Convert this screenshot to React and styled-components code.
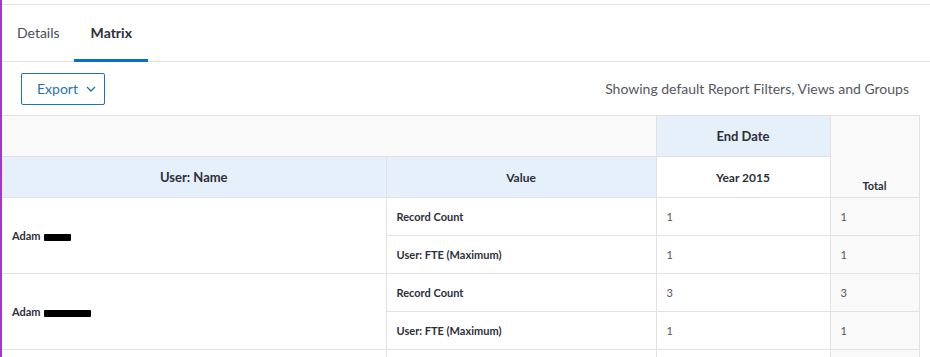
import React from "react";
import styled, { createGlobalStyle } from "styled-components";

const Global = createGlobalStyle`
  html, body { margin: 0; padding: 0; background: #fff; }
  body { font-family: Lato, "Open Sans", Arial, sans-serif; color: #2d2f3b; }
  * { box-sizing: border-box; }
`;

const Page = styled.div`
  width: 930px;
  height: 357px;
  overflow: hidden;
  border-left: 2px solid #9a3fb8;
  padding-top: 4px;
`;

const Frame = styled.div`
  border-top: 1px solid #e2e2e2;
`;

const Tabs = styled.div`
  display: flex;
  height: 57px;
  border-bottom: 1px solid #e2e2e2;
`;

const Tab = styled.div`
  display: flex;
  align-items: center;
  padding: ${(p) => (p.$active ? "0 16px 0 17px" : "0 14px 0 15px")};
  font-size: 14px;
  font-weight: ${(p) => (p.$active ? 700 : 400)};
  color: ${(p) => (p.$active ? "#2d2f3b" : "#4a4c57")};
  border-bottom: 3px solid ${(p) => (p.$active ? "#0b6fc6" : "transparent")};
  margin-bottom: -1px;
`;

const Toolbar = styled.div`
  display: flex;
  align-items: center;
  justify-content: space-between;
  height: 53px;
  padding: 0 19px;
`;

const ExportButton = styled.button`
  display: flex;
  align-items: center;
  gap: 8px;
  height: 32px;
  width: 84px;
  padding: 0 0 0 15px;
  border: 1px solid #1f73b7;
  border-radius: 2px;
  background: #fff;
  color: #1f73b7;
  font-family: Lato, "Open Sans", Arial, sans-serif;
  font-size: 14px;
`;

const Info = styled.div`
  font-size: 14px;
  color: #555760;
  padding-right: 2px;
`;

const Table = styled.table`
  border-collapse: collapse;
  width: 917px;
  table-layout: fixed;
  border-top: 1px solid #e2e2e2;
`;

const HeadCell = styled.th`
  height: 41px;
  padding: 0 10px;
  border: 1px solid #e2e2e2;
  font-size: ${(p) => p.$size || 13}px;
  font-weight: 700;
  color: #2d2f3b;
  text-align: center;
  vertical-align: ${(p) => (p.$bottom ? "bottom" : "middle")};
  padding-bottom: ${(p) => (p.$bottom ? "5px" : "0")};
  background: ${(p) =>
    p.$tone === "blue" ? "#e6f0fa" : p.$tone === "grey" ? "#f9f9f9" : "#fff"};
  &:first-child { border-left: none; }
`;

const Cell = styled.td`
  height: ${(p) => (p.$short ? "8px" : "38px")};
  padding: 0 10px;
  border: 1px solid #e2e2e2;
  font-size: 11px;
  font-weight: ${(p) => (p.$bold ? 700 : 400)};
  color: ${(p) => (p.$bold ? "#2d2f3b" : "#555555")};
  background: ${(p) => (p.$grey ? "#f9f9f9" : "#fff")};
  vertical-align: middle;
  &:first-child { border-left: none; }
`;

const Redact = styled.span`
  display: inline-block;
  width: ${(p) => p.$w}px;
  height: 7px;
  background: #000;
  margin-left: 3px;
  vertical-align: -1px;
  border-radius: 1px;
`;

const rows = [
  { name: "Adam", redact: 27, values: [["Record Count", "1", "1"], ["User: FTE (Maximum)", "1", "1"]] },
  { name: "Adam", redact: 47, values: [["Record Count", "3", "3"], ["User: FTE (Maximum)", "1", "1"]] },
];

export default function App() {
  return (
    <>
      <Global />
      <Page>
        <Frame>
          <Tabs>
            <Tab>Details</Tab>
            <Tab $active>Matrix</Tab>
          </Tabs>
          <Toolbar>
            <ExportButton>
              Export
              <svg width="10" height="6" viewBox="0 0 10 6" fill="none">
                <path d="M1 1l4 4 4-4" stroke="#1f73b7" strokeWidth="1.3" />
              </svg>
            </ExportButton>
            <Info>Showing default Report Filters, Views and Groups</Info>
          </Toolbar>
          <Table>
            <colgroup>
              <col style={{ width: 384 }} />
              <col style={{ width: 270 }} />
              <col style={{ width: 174 }} />
              <col style={{ width: 89 }} />
            </colgroup>
            <thead>
              <tr>
                <HeadCell colSpan={2} $tone="grey" />
                <HeadCell $tone="blue">End Date</HeadCell>
                <HeadCell rowSpan={2} $tone="grey" $size={11} $bottom>
                  Total
                </HeadCell>
              </tr>
              <tr>
                <HeadCell $tone="blue">User: Name</HeadCell>
                <HeadCell $tone="blue" $size={12}>Value</HeadCell>
                <HeadCell $size={12}>Year 2015</HeadCell>
              </tr>
            </thead>
            <tbody>
              {rows.map((r, i) =>
                r.values.map((v, j) => (
                  <tr key={`${i}-${j}`}>
                    {j === 0 && (
                      <Cell rowSpan={2} $bold>
                        {r.name}
                        <Redact $w={r.redact} />
                      </Cell>
                    )}
                    <Cell $bold>{v[0]}</Cell>
                    <Cell>{v[1]}</Cell>
                    <Cell $grey>{v[2]}</Cell>
                  </tr>
                ))
              )}
              <tr>
                <Cell $short />
                <Cell $short />
                <Cell $short />
                <Cell $short $grey />
              </tr>
            </tbody>
          </Table>
        </Frame>
      </Page>
    </>
  );
}
